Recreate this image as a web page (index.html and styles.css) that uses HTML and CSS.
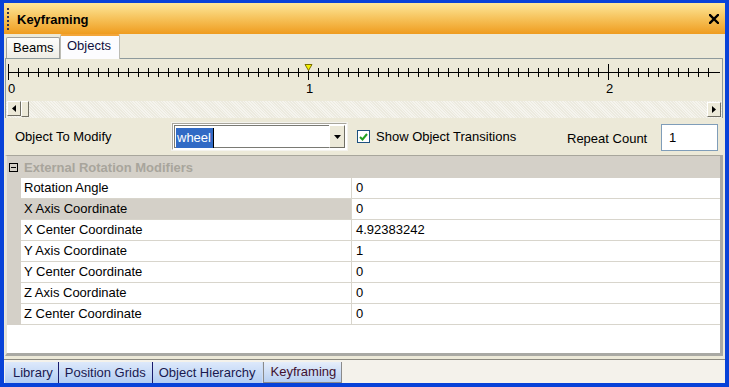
FILE: index.html
```html
<!DOCTYPE html>
<html>
<head>
<meta charset="utf-8">
<link rel="stylesheet" href="styles.css">
</head>
<body>
<div class="window">
  <div class="titlebar">
    <div class="grip"></div>
    <div class="title">Keyframing</div>
    <svg class="close" width="10" height="10" viewBox="0 0 10 10"><path d="M1 1 L9 9 M9 1 L1 9" stroke="#000" stroke-width="2.4" stroke-linecap="square"/></svg>
  </div>
  <div class="body">
    <div class="tabs">
      <div class="tab">Beams</div>
      <div class="tab active">Objects</div>
    </div>
    <div class="panel">
      <svg class="ruler" width="716" height="40" viewBox="6 59 716 40" id="ruler"></svg>
      <div class="scrollbar">
        <div class="sbtn"><svg width="4" height="7" viewBox="0 0 4 7"><path d="M4 0 L0 3.5 L4 7Z" fill="#000"/></svg></div>
        <div class="thumb"></div>
        <div class="track"></div>
        <div class="sbtn right"><svg width="4" height="7" viewBox="0 0 4 7"><path d="M0 0 L4 3.5 L0 7Z" fill="#000"/></svg></div>
      </div>
    </div>
    <div class="controls">
      <div class="lbl otm">Object To Modify</div>
      <div class="combo">
        <div class="combo-text"><span class="sel">wheel</span></div>
        <div class="combo-btn"><svg width="7" height="4" viewBox="0 0 7 4"><path d="M0 0 H7 L3.5 4Z" fill="#000"/></svg></div>
      </div>
      <div class="check"><svg width="9" height="8" viewBox="0 0 9 8"><path d="M1 4 L3.5 6.5 L8 1" stroke="#21a121" stroke-width="2" fill="none"/></svg></div>
      <div class="lbl sot">Show Object Transitions</div>
      <div class="lbl rc">Repeat Count</div>
      <div class="textbox">1</div>
    </div>
    <div class="grid">
      <div class="cat">
        <div class="minus"><svg width="9" height="9" viewBox="0 0 9 9"><rect x="0.5" y="0.5" width="8" height="8" fill="none" stroke="#000"/><path d="M2 4.5 H7" stroke="#000"/></svg></div>
        <div class="cat-name">External Rotation Modifiers</div>
      </div>
      <div class="rows">
        <div class="row"><div class="gut"></div><div class="name">Rotation Angle</div><div class="val">0</div></div>
        <div class="row selected"><div class="gut"></div><div class="name">X Axis Coordinate</div><div class="val">0</div></div>
        <div class="row"><div class="gut"></div><div class="name">X Center Coordinate</div><div class="val">4.92383242</div></div>
        <div class="row"><div class="gut"></div><div class="name">Y Axis Coordinate</div><div class="val">1</div></div>
        <div class="row"><div class="gut"></div><div class="name">Y Center Coordinate</div><div class="val">0</div></div>
        <div class="row"><div class="gut"></div><div class="name">Z Axis Coordinate</div><div class="val">0</div></div>
        <div class="row"><div class="gut"></div><div class="name">Z Center Coordinate</div><div class="val">0</div></div>
      </div>
      <div class="empty"></div>
    </div>
    <div class="bottom">
      <div class="btab">Library</div>
      <div class="btab">Position Grids</div>
      <div class="btab">Object Hierarchy</div>
      <div class="btab active">Keyframing</div>
    </div>
  </div>
</div>
<script>
(function(){
  var s = document.getElementById('ruler');
  var out = '<line x1="8" y1="72.5" x2="720" y2="72.5" stroke="#000" stroke-width="1"/>';
  for (var i = 0; i <= 70; i++) {
    var x = 8 + i * 10 + 0.5;
    if (i % 30 === 0) out += '<line x1="'+x+'" y1="64" x2="'+x+'" y2="80" stroke="#000"/>';
    else out += '<line x1="'+x+'" y1="68" x2="'+x+'" y2="77" stroke="#000"/>';
  }
  out += '<text x="8" y="93" class="rl">0</text><text x="306" y="93" class="rl">1</text><text x="606" y="93" class="rl">2</text>';
  out += '<path d="M305 64.5 L312 64.5 L308.5 70.5Z" fill="#f4f000" stroke="#7a7000" stroke-width="1"/>';
  s.innerHTML = out;
})();
</script>
</body>
</html>
```
FILE: styles.css
```css
html, body { margin: 0; padding: 0; }
body {
  width: 729px; height: 387px; overflow: hidden;
  font-family: "Liberation Sans", Arial, sans-serif; font-size: 13px; color: #000;
}
.window {
  box-sizing: border-box; width: 729px; height: 387px;
  border-style: solid; border-color: #0842d8;
  border-width: 3px 4px 5px 4px;
  display: flex; flex-direction: column;
  background: #ece9d8;
}
.titlebar {
  height: 31px; flex: none;
  background: linear-gradient(#fde79a, #f6c25a 50%, #ef9c1f);
  display: flex; align-items: center;
}
.grip {
  width: 1px; height: 22px; margin-left: 3px;
  border-left: 2px dotted #303050;
}
.title { font-weight: bold; font-size: 13px; margin-left: 7px; color: #000; margin-top: 1px; }
.close { margin-left: auto; margin-right: 6px; margin-top: 1px; }
.body { flex: 1; display: flex; flex-direction: column; }
.tabs { height: 24px; display: flex; align-items: flex-end; padding-left: 2px; }
.tab {
  box-sizing: border-box; height: 21px; padding: 0 6px; line-height: 20px;
  border: 1px solid #a0a09c; border-bottom: none; border-radius: 2px 2px 0 0;
  background: linear-gradient(#fdfdfc, #eeede5);
  color: #000; font-size: 13px; width: 54px;
}
.tab.active {
  height: 25px; width: 60px; background: #fcfcfe; border-top: 2px solid #f2a53a;
  border-color: #bcbcb4; border-top-color: #f2a53a; line-height: 20px; position: relative; z-index: 1; margin-bottom: -1px;
  color: #101040;
}
.panel {
  margin: 0 2px 0 1px; border: 1px solid #8e9a9c; border-bottom: none; height: 59px;
  display: flex; flex-direction: column;
}
.ruler { display: block; }
.ruler .rl { font-family: "Liberation Sans", Arial, sans-serif; font-size: 13px; fill: #000; }
.scrollbar {
  height: 17px; margin-top: 2px; display: flex;
  background-color: #f5f4ee;
  background-image: repeating-linear-gradient(45deg, #eceadf 0 1px, transparent 1px 2px);
}
.sbtn {
  width: 14px; height: 15px; box-sizing: border-box; margin-left: 1px;
  background: #ece9d8; border: 1px solid; border-color: #fff #716f64 #716f64 #fff;
  display: flex; align-items: center; justify-content: center;
}
.sbtn.right { margin-right: 1px; margin-left: 0; margin-top: 1px; }
.thumb {
  width: 8px; height: 16px; box-sizing: border-box;
  background: #ece9d8; border: 1px solid; border-color: #fff #716f64 #716f64 #fff;
}
.track { flex: 1; }
.controls { height: 37px; display: flex; align-items: center; }
.lbl { font-size: 13px; color: #000; }
.otm { margin-left: 11px; width: 157px; }
.combo {
  box-sizing: border-box; width: 175px; height: 27px;
  border: 1px solid #fff; border-top-color: #a8a69c; border-left-color: #a8a69c;
  padding: 1px; display: flex; background: #fff; outline: 1px solid #f4f3ee;
}
.combo-text { flex: 1; background: #fff; border: 1px solid #7a7a74; border-right: none; padding-top: 2px; padding-left: 1px; }
.sel { background: #316ac5; color: #fff; padding: 2px 2px 2px 1px; display: inline-block; line-height: 16px; border-right: 1px solid #000; }
.combo-btn {
  width: 16px; box-sizing: border-box; background: #ece9d8;
  border: 1px solid; border-color: #fff #716f64 #716f64 #fff;
  display: flex; align-items: center; justify-content: center;
}
.check {
  box-sizing: border-box; width: 13px; height: 13px; margin-left: 10px;
  border: 1px solid #1c5180; background: #fff;
  display: flex; align-items: center; justify-content: center;
}
.sot { margin-left: 6px; width: 191px; }
.rc { width: 94px; margin-top: 4px; }
.textbox {
  box-sizing: border-box; width: 57px; height: 27px; border: 1px solid #7f9db9; background: #fff;
  padding-left: 7px; line-height: 25px; margin-top: 2px;
}
.grid {
  margin: 0 2px 0 1px; height: 201px; flex: none; background: #fff;
  border-top: 1px solid #a8a69c; border-right: 3px solid #a9a9a4; border-bottom: 3px solid #a9a9a4;
  border-left: 2px solid #e4e2da;
  display: flex; flex-direction: column; box-sizing: border-box;
}
.cat { height: 22px; background: #d4d0c8; display: flex; align-items: center; flex: none; }
.minus { width: 9px; height: 9px; margin-left: 2px; display: flex; }
.minus svg { display: block; }
.cat-name { font-weight: bold; color: #a8a59c; margin-left: 6px; font-size: 13px; }
.rows { display: flex; flex-direction: column; }
.row { height: 21px; display: flex; box-sizing: border-box; }
.gut { width: 14px; background: #d4d0c8; flex: none; }
.name { width: 331px; box-sizing: border-box; padding-left: 3px; line-height: 20px; border-bottom: 1px solid #d8d5cc; border-right: 1px solid #d8d5cc; }
.val { flex: 1; padding-left: 4px; line-height: 20px; border-bottom: 1px solid #d8d5cc; }
.row.selected .name { background: #d4d0c8; }
.empty { flex: 1; }
.bottom {
  margin-top: 3px; border-top: 1px solid #8c8a80; flex: 1; background: #f4f2eb;
  display: flex; align-items: stretch; padding-left: 1px;
}
.btab {
  background: linear-gradient(#dde9fb, #b3cdf2);
  padding: 0 5px 0 8px; line-height: 21px; color: #191950; font-size: 13px;
  border-right: 1px solid #1b1b6c; margin-top: 2px;
}
.btab:nth-child(2) { padding-left: 6px; padding-right: 6px; }
.btab:nth-child(3) { border-right-color: #cfddf3; padding-left: 6px; padding-right: 7px; }
.btab.active {
  background: linear-gradient(#e6eefb, #b7cff1);
  border: 1px solid #8a8a8a; border-top: none; padding: 0 5px 0 6px; line-height: 20px;
  color: #401030;
}
```
